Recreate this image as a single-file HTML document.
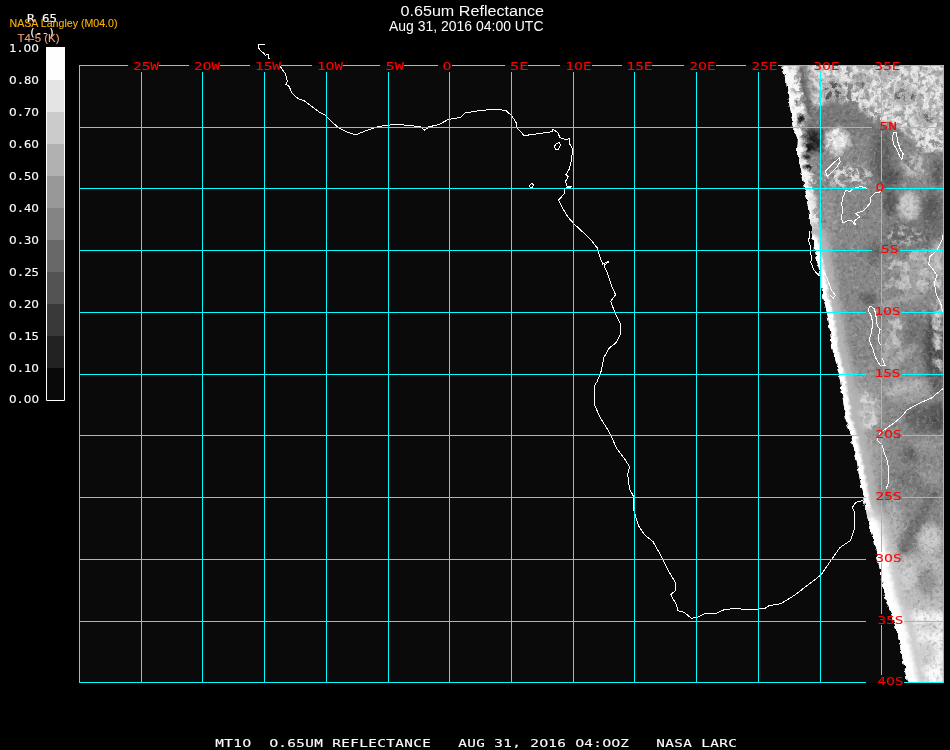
<!DOCTYPE html>
<html lang="en"><head><meta charset="utf-8"><title>0.65um Reflectance</title>
<style>html,body{margin:0;padding:0;background:#000;}body{width:950px;height:750px;overflow:hidden;position:relative;}svg{position:absolute;left:0;top:0;display:block;}.mc{font-family:"DejaVu Sans Mono","Liberation Mono",monospace;font-size:11px;}.mc{stroke-width:.12px}.z{font-family:"DejaVu Sans","Liberation Sans",sans-serif;}.hv{font-family:"Liberation Sans",Arial,Helvetica,sans-serif;}</style></head><body>
<svg width="950" height="750" viewBox="0 0 950 750">
<defs>
<clipPath id="pc"><rect x="79" y="65" width="864" height="618"/></clipPath>
<filter id="disp" filterUnits="userSpaceOnUse" x="760" y="40" width="200" height="670"><feTurbulence type="fractalNoise" baseFrequency="0.2" numOctaves="2" seed="9" result="n"/><feDisplacementMap in="SourceGraphic" in2="n" scale="5" xChannelSelector="R" yChannelSelector="G"/></filter>
<filter id="fnw" x="0" y="0" width="100%" height="100%"><feTurbulence type="fractalNoise" baseFrequency="0.3" numOctaves="2" seed="31"/><feColorMatrix type="matrix" values="0 0 0 0 1  0 0 0 0 1  0 0 0 0 1  3 0 0 0 -1.45"/></filter>
<filter id="fnb" x="0" y="0" width="100%" height="100%"><feTurbulence type="fractalNoise" baseFrequency="0.3" numOctaves="2" seed="57"/><feColorMatrix type="matrix" values="0 0 0 0 0  0 0 0 0 0  0 0 0 0 0  3 0 0 0 -1.45"/></filter>
<clipPath id="lc"><rect x="0" y="0" width="943" height="750"/></clipPath>
<clipPath id="sw"><polygon points="779,50 782,64 786,80 789,100 791,113 793,127 798,140 797,153 799,160 803,180 805,188 808,207 811,227 813,240 815,250 819,270 821,283 823,297 827,312 830,330 832,347 839,374 843,400 846,420 851,435 857,463 863,497 866,510 870,527 878,559 882,580 886,600 894,621 899,640 903,660 907,680 909,684 913,700 960,700 960,50"/></clipPath>
<filter id="b1" x="-50%" y="-50%" width="200%" height="200%"><feGaussianBlur stdDeviation="1"/></filter>
<filter id="b2" x="-50%" y="-50%" width="200%" height="200%"><feGaussianBlur stdDeviation="2"/></filter>
<filter id="b3" x="-50%" y="-50%" width="200%" height="200%"><feGaussianBlur stdDeviation="3"/></filter>
<filter id="b4" x="-50%" y="-50%" width="200%" height="200%"><feGaussianBlur stdDeviation="4"/></filter>
<filter id="b5" x="-50%" y="-50%" width="200%" height="200%"><feGaussianBlur stdDeviation="5"/></filter>
<filter id="b6" x="-50%" y="-50%" width="200%" height="200%"><feGaussianBlur stdDeviation="6"/></filter>
<filter id="b8" x="-50%" y="-50%" width="200%" height="200%"><feGaussianBlur stdDeviation="8"/></filter>
<filter id="cA" x="-20%" y="-20%" width="140%" height="140%"><feGaussianBlur in="SourceGraphic" stdDeviation="2" result="s"/><feTurbulence type="fractalNoise" baseFrequency="0.17" numOctaves="3" seed="3" result="t"/><feColorMatrix in="t" type="matrix" values="0 0 0 0 0  0 0 0 0 0  0 0 0 0 0  5 0 0 0 -1.9" result="m"/><feComposite in="s" in2="m" operator="in"/></filter>
<filter id="cB" x="-20%" y="-20%" width="140%" height="140%"><feGaussianBlur in="SourceGraphic" stdDeviation="2" result="s"/><feTurbulence type="fractalNoise" baseFrequency="0.17" numOctaves="3" seed="3" result="t"/><feColorMatrix in="t" type="matrix" values="0 0 0 0 0  0 0 0 0 0  0 0 0 0 0  5 0 0 0 -2.2" result="m"/><feComposite in="s" in2="m" operator="in"/></filter>
<filter id="cC" x="-20%" y="-20%" width="140%" height="140%"><feGaussianBlur in="SourceGraphic" stdDeviation="2" result="s"/><feTurbulence type="fractalNoise" baseFrequency="0.17" numOctaves="3" seed="3" result="t"/><feColorMatrix in="t" type="matrix" values="0 0 0 0 0  0 0 0 0 0  0 0 0 0 0  5 0 0 0 -2.6" result="m"/><feComposite in="s" in2="m" operator="in"/></filter>
<filter id="sA" x="-20%" y="-20%" width="140%" height="140%"><feGaussianBlur in="SourceGraphic" stdDeviation="2" result="s"/><feTurbulence type="fractalNoise" baseFrequency="0.1" numOctaves="3" seed="5" result="t"/><feColorMatrix in="t" type="matrix" values="0 0 0 0 0  0 0 0 0 0  0 0 0 0 0  5 0 0 0 -1.9" result="m"/><feComposite in="s" in2="m" operator="in"/></filter>
<filter id="sB" x="-20%" y="-20%" width="140%" height="140%"><feGaussianBlur in="SourceGraphic" stdDeviation="2" result="s"/><feTurbulence type="fractalNoise" baseFrequency="0.1" numOctaves="3" seed="5" result="t"/><feColorMatrix in="t" type="matrix" values="0 0 0 0 0  0 0 0 0 0  0 0 0 0 0  5 0 0 0 -2.3" result="m"/><feComposite in="s" in2="m" operator="in"/></filter>
</defs>
<rect x="79" y="65" width="865" height="618" fill="#0a0a0a"/>
<g clip-path="url(#pc)"><g filter="url(#disp)"><g clip-path="url(#sw)">
<rect x="770" y="45" width="195" height="660" fill="#888888"/>
<polygon points="775,60 945,60 945,135 775,135" fill="rgb(120,120,120)" filter="url(#b3)"/>
<ellipse cx="936" cy="72" rx="10" ry="9" transform="rotate(0 936 72)" fill="rgb(105,105,105)" filter="url(#b2)"/>
<ellipse cx="882" cy="158" rx="11" ry="28" transform="rotate(0 882 158)" fill="rgb(95,95,95)" filter="url(#b4)"/>
<ellipse cx="892" cy="178" rx="9" ry="10" transform="rotate(0 892 178)" fill="rgb(85,85,85)" filter="url(#b3)"/>
<ellipse cx="938" cy="172" rx="6" ry="14" transform="rotate(0 938 172)" fill="rgb(90,90,90)" filter="url(#b3)"/>
<ellipse cx="890" cy="203" rx="7" ry="13" transform="rotate(0 890 203)" fill="rgb(85,85,85)" filter="url(#b3)"/>
<ellipse cx="932" cy="213" rx="10" ry="22" transform="rotate(0 932 213)" fill="rgb(88,88,88)" filter="url(#b4)"/>
<polygon points="884,222 942,222 942,250 884,250" fill="rgb(112,112,112)" filter="url(#b4)"/>
<ellipse cx="828" cy="220" rx="8" ry="30" transform="rotate(0 828 220)" fill="rgb(150,150,150)" filter="url(#b4)"/>
<ellipse cx="874" cy="252" rx="7" ry="13" transform="rotate(0 874 252)" fill="rgb(106,106,106)" filter="url(#b3)"/>
<ellipse cx="868" cy="299" rx="9" ry="6" transform="rotate(0 868 299)" fill="rgb(100,100,100)" filter="url(#b2)"/>
<ellipse cx="913" cy="334" rx="11" ry="19" transform="rotate(0 913 334)" fill="rgb(114,114,114)" filter="url(#b4)"/>
<ellipse cx="934" cy="347" rx="10" ry="34" transform="rotate(0 934 347)" fill="rgb(76,76,76)" filter="url(#b3)"/>
<ellipse cx="937" cy="383" rx="7" ry="10" transform="rotate(0 937 383)" fill="rgb(90,90,90)" filter="url(#b3)"/>
<ellipse cx="925" cy="418" rx="20" ry="15" transform="rotate(0 925 418)" fill="rgb(98,98,98)" filter="url(#b4)"/>
<ellipse cx="938" cy="418" rx="6" ry="16" transform="rotate(0 938 418)" fill="rgb(80,80,80)" filter="url(#b3)"/>
<ellipse cx="910" cy="454" rx="8" ry="7" transform="rotate(0 910 454)" fill="rgb(92,92,92)" filter="url(#b3)"/>
<ellipse cx="907" cy="480" rx="12" ry="9" transform="rotate(0 907 480)" fill="rgb(115,115,115)" filter="url(#b4)"/>
<ellipse cx="928" cy="488" rx="14" ry="8" transform="rotate(0 928 488)" fill="rgb(108,108,108)" filter="url(#b3)"/>
<ellipse cx="909" cy="206" rx="10" ry="14" transform="rotate(0 909 206)" fill="rgb(202,202,202)" filter="url(#b2)"/>
<ellipse cx="916" cy="274" rx="14" ry="22" transform="rotate(0 916 274)" fill="rgb(160,160,160)" filter="url(#b4)"/>
<ellipse cx="937" cy="258" rx="6" ry="18" transform="rotate(0 937 258)" fill="rgb(195,195,195)" filter="url(#b3)"/>
<polyline points="883,306 900,300 916,296" fill="none" stroke="rgb(165,165,165)" stroke-width="7" stroke-linecap="round" stroke-linejoin="round" filter="url(#b2)"/>
<ellipse cx="892" cy="340" rx="8" ry="27" transform="rotate(8 892 340)" fill="rgb(158,158,158)" filter="url(#b4)"/>
<polyline points="893,366 903,356 914,346" fill="none" stroke="rgb(170,170,170)" stroke-width="6" stroke-linecap="round" stroke-linejoin="round" filter="url(#b2)"/>
<ellipse cx="866" cy="385" rx="14" ry="18" transform="rotate(0 866 385)" fill="rgb(150,150,150)" filter="url(#b5)"/>
<ellipse cx="864" cy="412" rx="16" ry="21" transform="rotate(0 864 412)" fill="rgb(182,182,182)" filter="url(#b4)"/>
<ellipse cx="906" cy="390" rx="25" ry="12" transform="rotate(0 906 390)" fill="rgb(165,165,165)" filter="url(#b4)"/>
<polyline points="888,393 918,383" fill="none" stroke="rgb(192,192,192)" stroke-width="5" stroke-linecap="round" stroke-linejoin="round" filter="url(#b2)"/>
<ellipse cx="892" cy="420" rx="10" ry="11" transform="rotate(0 892 420)" fill="rgb(138,138,138)" filter="url(#b4)"/>
<ellipse cx="928" cy="446" rx="14" ry="9" transform="rotate(0 928 446)" fill="rgb(150,150,150)" filter="url(#b4)"/>
<ellipse cx="870" cy="462" rx="12" ry="30" transform="rotate(12 870 462)" fill="rgb(160,160,160)" filter="url(#b5)"/>
<ellipse cx="932" cy="480" rx="10" ry="12" transform="rotate(0 932 480)" fill="rgb(150,150,150)" filter="url(#b4)"/>
<polygon points="880,555 945,555 945,625 890,625" fill="rgb(190,190,190)" filter="url(#b4)"/>
<polygon points="890,612 945,612 945,690 905,690" fill="rgb(250,250,250)" filter="url(#b3)"/>
<ellipse cx="927" cy="581" rx="11" ry="15" transform="rotate(0 927 581)" fill="rgb(148,148,148)" filter="url(#b3)"/>
<ellipse cx="928" cy="627" rx="13" ry="5" transform="rotate(0 928 627)" fill="rgb(205,205,205)" filter="url(#b3)"/>
<ellipse cx="927" cy="653" rx="10" ry="13" transform="rotate(0 927 653)" fill="rgb(208,208,208)" filter="url(#b3)"/>
<ellipse cx="893" cy="528" rx="10" ry="30" transform="rotate(0 893 528)" fill="rgb(175,175,175)" filter="url(#b4)"/>
<ellipse cx="930" cy="540" rx="13" ry="16" transform="rotate(0 930 540)" fill="rgb(200,200,200)" filter="url(#b3)"/>
<polyline points="933,495 903,548" fill="none" stroke="rgb(112,112,112)" stroke-width="11" stroke-linecap="round" stroke-linejoin="round" filter="url(#b2)"/>
<ellipse cx="906" cy="578" rx="9" ry="12" transform="rotate(0 906 578)" fill="rgb(205,205,205)" filter="url(#b3)"/>
<polygon points="845,60 945,60 945,145 915,136 898,124 875,114 856,100" fill="rgb(172,172,172)" filter="url(#b4)"/>
<polygon points="780,60 796,60 806,116 798,127 785,127" fill="rgb(175,175,175)" filter="url(#b3)"/>
<polygon points="806,60 845,60 845,96 824,102 814,106" fill="rgb(180,180,180)" filter="url(#b3)"/>
<ellipse cx="837" cy="141" rx="10" ry="11" transform="rotate(0 837 141)" fill="rgb(225,225,225)" filter="url(#b3)"/>
<polygon points="822,60 945,60 945,150 915,140 898,128 875,120 850,102 822,102" fill="rgb(232,232,232)" filter="url(#cA)"/>
<polygon points="780,60 798,60 808,116 800,127 785,127" fill="rgb(240,240,240)" filter="url(#cA)"/>
<polygon points="808,60 824,60 824,104 814,108" fill="rgb(225,225,225)" filter="url(#cA)"/>
<polyline points="801,70 805,92 810,114" fill="none" stroke="rgb(100,100,100)" stroke-width="4" stroke-linecap="round" stroke-linejoin="round" filter="url(#b1)"/>
<ellipse cx="833" cy="92" rx="10" ry="12" transform="rotate(0 833 92)" fill="rgb(90,90,90)" filter="url(#cB)"/>
<ellipse cx="862" cy="80" rx="9" ry="7" transform="rotate(0 862 80)" fill="rgb(100,100,100)" filter="url(#cB)"/>
<ellipse cx="905" cy="96" rx="12" ry="8" transform="rotate(0 905 96)" fill="rgb(100,100,100)" filter="url(#cB)"/>
<ellipse cx="925" cy="118" rx="10" ry="7" transform="rotate(0 925 118)" fill="rgb(105,105,105)" filter="url(#cB)"/>
<ellipse cx="885" cy="72" rx="8" ry="5" transform="rotate(0 885 72)" fill="rgb(110,110,110)" filter="url(#cB)"/>
<polygon points="795,150 812,150 816,190 805,190" fill="rgb(215,215,215)" filter="url(#cB)"/>
<ellipse cx="837" cy="141" rx="12" ry="13" transform="rotate(0 837 141)" fill="rgb(245,245,245)" filter="url(#cA)"/>
<ellipse cx="813" cy="141" rx="9" ry="12" transform="rotate(0 813 141)" fill="rgb(30,30,30)" filter="url(#b3)"/>
<ellipse cx="847" cy="176" rx="24" ry="11" transform="rotate(0 847 176)" fill="rgb(225,225,225)" filter="url(#cB)"/>
<ellipse cx="915" cy="166" rx="12" ry="12" transform="rotate(0 915 166)" fill="rgb(190,190,190)" filter="url(#cA)"/>
<ellipse cx="930" cy="142" rx="14" ry="10" transform="rotate(0 930 142)" fill="rgb(235,235,235)" filter="url(#cA)"/>
<ellipse cx="905" cy="236" rx="18" ry="9" transform="rotate(0 905 236)" fill="rgb(185,185,185)" filter="url(#cB)"/>
<ellipse cx="925" cy="258" rx="14" ry="9" transform="rotate(0 925 258)" fill="rgb(180,180,180)" filter="url(#cB)"/>
<ellipse cx="916" cy="274" rx="14" ry="22" transform="rotate(0 916 274)" fill="rgb(200,200,200)" filter="url(#sB)"/>
<ellipse cx="937" cy="300" rx="5" ry="40" transform="rotate(0 937 300)" fill="rgb(215,215,215)" filter="url(#sA)"/>
<ellipse cx="938" cy="350" rx="4" ry="30" transform="rotate(0 938 350)" fill="rgb(215,215,215)" filter="url(#sA)"/>
<ellipse cx="864" cy="412" rx="16" ry="21" transform="rotate(0 864 412)" fill="rgb(215,215,215)" filter="url(#sB)"/>
<ellipse cx="905" cy="275" rx="22" ry="24" transform="rotate(0 905 275)" fill="rgb(195,195,195)" filter="url(#sB)"/>
<ellipse cx="894" cy="340" rx="10" ry="28" transform="rotate(5 894 340)" fill="rgb(195,195,195)" filter="url(#sB)"/>
<rect x="770" y="45" width="195" height="660" filter="url(#fnw)" opacity="0.22"/>
<rect x="770" y="45" width="195" height="660" filter="url(#fnb)" opacity="0.2"/>
<polyline points="782,64 786,80 789,100 791,113 793,127 798,140" fill="none" stroke="rgb(245,245,245)" stroke-width="25" stroke-linecap="round" stroke-linejoin="round" filter="url(#cA)"/>
<polyline points="793,127 798,140 797,153 799,160 803,180 805,188 808,207 811,227 813,240 815,250" fill="none" stroke="rgb(240,240,240)" stroke-width="17" stroke-linecap="round" stroke-linejoin="round" filter="url(#cA)"/>
<polyline points="782,64 786,80 789,100 791,113 793,127 798,140 797,153 799,160 803,180 805,188 808,207 811,227 813,240 815,250" fill="none" stroke="rgb(250,250,250)" stroke-width="9" stroke-linecap="round" stroke-linejoin="round" filter="url(#b2)"/>
<polyline points="813,240 815,250 819,270 821,283 823,297 827,312 830,330 832,347 839,374 843,400 846,420 851,435 857,463 863,497 866,510 870,527 878,559 882,580 886,600 894,621 899,640 903,660 907,680 909,684" fill="none" stroke="rgb(182,182,182)" stroke-width="30" stroke-linecap="round" stroke-linejoin="round" filter="url(#b3)"/>
<polyline points="813,240 815,250 819,270 821,283 823,297 827,312 830,330 832,347 839,374 843,400 846,420 851,435 857,463 863,497 866,510 870,527 878,559 882,580 886,600 894,621 899,640 903,660 907,680 909,684" fill="none" stroke="rgb(255,255,255)" stroke-width="11" stroke-linecap="round" stroke-linejoin="round" filter="url(#b1)"/>
<polyline points="870,527 878,559 882,580 886,600 894,621 899,640 903,660 907,680 909,684" fill="none" stroke="rgb(205,205,205)" stroke-width="34" stroke-linecap="round" stroke-linejoin="round" filter="url(#b4)"/>
<polyline points="870,527 878,559 882,580 886,600 894,621 899,640 903,660 907,680 909,684" fill="none" stroke="rgb(255,255,255)" stroke-width="20" stroke-linecap="round" stroke-linejoin="round" filter="url(#b2)"/>
<ellipse cx="801" cy="119" rx="2.5" ry="5" transform="rotate(20 801 119)" fill="rgb(15,15,15)" filter="url(#b1)"/>
<ellipse cx="809" cy="148" rx="2" ry="5" transform="rotate(0 809 148)" fill="rgb(12,12,12)" filter="url(#b1)"/>
<ellipse cx="806" cy="157" rx="4" ry="1.8" transform="rotate(0 806 157)" fill="rgb(12,12,12)" filter="url(#b1)"/>
<ellipse cx="808" cy="167" rx="4" ry="2" transform="rotate(10 808 167)" fill="rgb(12,12,12)" filter="url(#b1)"/>
<ellipse cx="797" cy="103" rx="1.5" ry="2" transform="rotate(0 797 103)" fill="rgb(15,15,15)" filter="url(#b1)"/>
</g></g></g>
<g clip-path="url(#lc)">
<polyline points="279.9,66 282.2,69.3 285,73 286.4,77.2 287.3,81.8 285.9,84.2 289.2,86.5 291.5,92.1 293.8,94.9 295.7,96.8 299.9,99.6 304,100.5 312.6,107 319,112 325,115 332.6,122.6 339,128 347,132 355.8,135 366,130.6 379,126.4 395.8,124.3 412.6,125.8 421,127 424.8,130.4 428.4,127 439.7,124.3 447.8,119.6 460.5,117.3 465,113 478,110.8 494,109.2 505.7,110.4 511.5,115.5 516,122.4 517.3,128.2 524.2,135.6 535.8,134 552,131.7 553,129 557.8,132.8 560,137.5 566,139.8 569.4,138.6 570,144.4 572.4,149 571.7,159.5 569.4,168.7 566,174.5 568.2,176.8 565.4,181.5 567,186 572.4,186.8 564.7,188.4 564,194.2 558.5,200 562.4,208 568.2,217.4 574,223.9 582,231.3 591.4,240.5 597.3,248 600,257.3 602.7,264 609.3,261.3 604,265.3 608,274.7 612,286.7 615.5,294.7 610.7,301.3 614.7,312 620,322.7 620,334.7 616,342.7 609.3,348 604,357.3 601.3,370.7 597.3,381.3 594.7,385.3 594.7,405.3 600,417.3 606.7,428 610.6,434.7 616.4,447.9 625.2,459.6 629.6,467 627.6,474.3 629.6,489 633.5,496.3 634,511 638.4,525.7 644.3,534.5 653.1,541.8 660.5,555 667.8,569.7 675.7,583 675.7,590.3 670.7,594.7 676.6,605 678,610.8 684,612.3 691.3,618.2 697.2,617.3 704.5,613.8 716.2,613.2 725,609.4 736.8,608.5 750,610 765.6,608 769,605.7 781,603.6 795,595 807,585.6 821,575 831.5,559.6 840,547.5 850.5,540.5 854,530 855,512.8 852.3,507.6 855.7,502.4 862.6,500.7" fill="none" stroke="#fff" stroke-width="1" shape-rendering="crispEdges"/>
<polyline points="265,45 258.4,44.5 258.9,48.3 261.2,51.5 264,53.4 265.4,55.3 268.7,54.3 269.1,59.5" fill="none" stroke="#fff" stroke-width="1" shape-rendering="crispEdges"/>
<polyline points="554.3,146.7 556.6,143.3 559.6,142.8 560.6,145.1 558.5,149 555.5,149 554.3,146.7" fill="none" stroke="#fff" stroke-width="1" shape-rendering="crispEdges"/>
<polyline points="529.5,185.4 531.6,183.6 533.7,184.5 532.3,187.3 530,187 529.5,185.4" fill="none" stroke="#fff" stroke-width="1" shape-rendering="crispEdges"/>
<polyline points="893.4,132.3 896.2,132.3 897.6,141.2 900.4,149.6 903.2,153.8 901.8,159.4 899.9,156.6 897,149.6 893.4,144 892.6,137 893.4,132.3" fill="none" stroke="#fff" stroke-width="1" shape-rendering="crispEdges"/>
<polyline points="826.2,174.8 825.7,170.6 830.4,165.9 836,160.8 839.4,158 840.2,161.4 837.4,166.4 831.8,172 827.6,176.2 826.2,174.8" fill="none" stroke="#fff" stroke-width="1" shape-rendering="crispEdges"/>
<polyline points="880.8,191.7 875.2,193 871,197.3 870.2,202.9 866.8,207 862.6,211.3 855.6,213.5 859.8,216.9 854.2,221 855.6,225.3 851.4,220.2 847.2,221 843,223 841,216.9 843,211.3 841.6,204.3 843,197.3 845.8,190.3 850,191.7 853.4,188.3 861.2,186.6 866.8,188.3" fill="none" stroke="#fff" stroke-width="1" shape-rendering="crispEdges"/>
<polyline points="810,230.7 809.7,237.3 808,240 810,244.7 810,253.3 812,256.7 810.7,262 813.3,268.7 816,272.7 819.3,276 821.3,275.3 824.7,272.7 828,280.7 831.3,290 835.3,295.3 833.3,298 830,295.3" fill="none" stroke="#fff" stroke-width="1" shape-rendering="crispEdges"/>
<polyline points="869.9,305.7 868,310 870.8,314.7 872.7,322.2 871.7,331.5 869,339.9 872.7,348.3 875.5,357.6 880,365 884.8,365 882,357.6 881,344.6 879.2,343.6 878.3,337 880,329.6 877.3,325.9 876.4,318.4 874.5,309 869.9,305.7" fill="none" stroke="#fff" stroke-width="1" shape-rendering="crispEdges"/>
<polyline points="948,221 943.9,228 942.5,239.3 936.9,250.5 929.6,256.8 928.7,264.3 933.4,269.9 937,275.5 934.3,283 936.2,294 940.8,303.5 942.7,312 948,316.6" fill="none" stroke="#fff" stroke-width="1" shape-rendering="crispEdges"/>
<polyline points="948,381 942.7,388.7 931.5,398 918.4,403.6 907,410 901.6,416.7 894,423 886.7,428 880,433.5 877,440 882,444.7 884,452 887.6,461.5 889,474.6 888,484 885.8,489.5" fill="none" stroke="#fff" stroke-width="1" shape-rendering="crispEdges"/>
</g>
<rect x="79" y="65" width="49" height="1" fill="#00ffff"/>
<rect x="159" y="65" width="30" height="1" fill="#00ffff"/>
<rect x="220" y="65" width="30" height="1" fill="#00ffff"/>
<rect x="281" y="65" width="31" height="1" fill="#00ffff"/>
<rect x="343" y="65" width="37" height="1" fill="#00ffff"/>
<rect x="404" y="65" width="34" height="1" fill="#00ffff"/>
<rect x="452" y="65" width="53" height="1" fill="#00ffff"/>
<rect x="528" y="65" width="32" height="1" fill="#00ffff"/>
<rect x="592" y="65" width="30" height="1" fill="#00ffff"/>
<rect x="652" y="65" width="32" height="1" fill="#00ffff"/>
<rect x="716" y="65" width="30" height="1" fill="#00ffff"/>
<rect x="778" y="65" width="30" height="1" fill="#00ffff"/>
<rect x="840" y="65" width="30" height="1" fill="#00ffff"/>
<rect x="900" y="65" width="44" height="1" fill="#00ffff"/>
<rect x="79" y="127" width="793" height="1" fill="#00ffff"/>
<rect x="898" y="127" width="46" height="1" fill="#00ffff"/>
<rect x="79" y="188" width="787" height="1" fill="#00ffff"/>
<rect x="886" y="188" width="58" height="1" fill="#00ffff"/>
<rect x="79" y="250" width="793" height="1" fill="#00ffff"/>
<rect x="900" y="250" width="44" height="1" fill="#00ffff"/>
<rect x="79" y="312" width="787" height="1" fill="#00ffff"/>
<rect x="902" y="312" width="42" height="1" fill="#00ffff"/>
<rect x="79" y="374" width="787" height="1" fill="#00ffff"/>
<rect x="902" y="374" width="42" height="1" fill="#00ffff"/>
<rect x="79" y="435" width="787" height="1" fill="#00ffff"/>
<rect x="902" y="435" width="42" height="1" fill="#00ffff"/>
<rect x="79" y="497" width="787" height="1" fill="#00ffff"/>
<rect x="902" y="497" width="42" height="1" fill="#00ffff"/>
<rect x="79" y="559" width="787" height="1" fill="#00ffff"/>
<rect x="902" y="559" width="42" height="1" fill="#00ffff"/>
<rect x="79" y="621" width="787" height="1" fill="#00ffff"/>
<rect x="904" y="621" width="40" height="1" fill="#00ffff"/>
<rect x="79" y="682" width="787" height="1" fill="#00ffff"/>
<rect x="904" y="682" width="40" height="1" fill="#00ffff"/>
<rect x="79" y="65" width="1" height="618" fill="#00ffff"/>
<rect x="141" y="72" width="1" height="611" fill="#00ffff"/>
<rect x="202" y="72" width="1" height="611" fill="#00ffff"/>
<rect x="264" y="72" width="1" height="611" fill="#00ffff"/>
<rect x="326" y="72" width="1" height="611" fill="#00ffff"/>
<rect x="388" y="72" width="1" height="611" fill="#00ffff"/>
<rect x="449" y="72" width="1" height="611" fill="#00ffff"/>
<rect x="511" y="72" width="1" height="611" fill="#00ffff"/>
<rect x="573" y="72" width="1" height="611" fill="#00ffff"/>
<rect x="634" y="72" width="1" height="611" fill="#00ffff"/>
<rect x="696" y="72" width="1" height="611" fill="#00ffff"/>
<rect x="758" y="72" width="1" height="611" fill="#00ffff"/>
<rect x="820" y="72" width="1" height="611" fill="#00ffff"/>
<rect x="881" y="72" width="1" height="48" fill="#00ffff"/>
<rect x="881" y="131" width="1" height="50" fill="#00ffff"/>
<rect x="881" y="192" width="1" height="51" fill="#00ffff"/>
<rect x="881" y="254" width="1" height="51" fill="#00ffff"/>
<rect x="881" y="316" width="1" height="51" fill="#00ffff"/>
<rect x="881" y="378" width="1" height="50" fill="#00ffff"/>
<rect x="881" y="439" width="1" height="51" fill="#00ffff"/>
<rect x="881" y="501" width="1" height="51" fill="#00ffff"/>
<rect x="881" y="563" width="1" height="51" fill="#00ffff"/>
<rect x="881" y="625" width="1" height="50" fill="#00ffff"/>
<rect x="943" y="65" width="1" height="618" fill="#00ffff"/>
<g opacity="0.999">
<text class="mc" x="133" y="70" textLength="26" lengthAdjust="spacingAndGlyphs" fill="#f00" stroke="#f00">25W</text>
<text class="mc" x="194" y="70" textLength="26" lengthAdjust="spacingAndGlyphs" fill="#f00" stroke="#f00">2<tspan class="z">0</tspan>W</text>
<text class="mc" x="255" y="70" textLength="26" lengthAdjust="spacingAndGlyphs" fill="#f00" stroke="#f00">15W</text>
<text class="mc" x="317" y="70" textLength="26" lengthAdjust="spacingAndGlyphs" fill="#f00" stroke="#f00">1<tspan class="z">0</tspan>W</text>
<text class="mc" x="385.5" y="70" textLength="18.5" lengthAdjust="spacingAndGlyphs" fill="#f00" stroke="#f00">5W</text>
<text class="mc" x="442.5" y="70" textLength="9" lengthAdjust="spacingAndGlyphs" fill="#f00" stroke="#f00"><tspan class="z">0</tspan></text>
<text class="mc" x="510" y="70" textLength="18.5" lengthAdjust="spacingAndGlyphs" fill="#f00" stroke="#f00">5E</text>
<text class="mc" x="565.5" y="70" textLength="26" lengthAdjust="spacingAndGlyphs" fill="#f00" stroke="#f00">1<tspan class="z">0</tspan>E</text>
<text class="mc" x="626.5" y="70" textLength="26" lengthAdjust="spacingAndGlyphs" fill="#f00" stroke="#f00">15E</text>
<text class="mc" x="689.5" y="70" textLength="26" lengthAdjust="spacingAndGlyphs" fill="#f00" stroke="#f00">2<tspan class="z">0</tspan>E</text>
<text class="mc" x="751.5" y="70" textLength="26" lengthAdjust="spacingAndGlyphs" fill="#f00" stroke="#f00">25E</text>
<text class="mc" x="813.5" y="70" textLength="26" lengthAdjust="spacingAndGlyphs" fill="#f00" stroke="#f00">3<tspan class="z">0</tspan>E</text>
<text class="mc" x="874.5" y="70" textLength="26" lengthAdjust="spacingAndGlyphs" fill="#f00" stroke="#f00">35E</text>
<text class="mc" x="879.5" y="130" textLength="17.5" lengthAdjust="spacingAndGlyphs" fill="#f00" stroke="#f00">5N</text>
<text class="mc" x="875.5" y="191" textLength="9" lengthAdjust="spacingAndGlyphs" fill="#f00" stroke="#f00"><tspan class="z">0</tspan></text>
<text class="mc" x="881" y="253" textLength="17.5" lengthAdjust="spacingAndGlyphs" fill="#f00" stroke="#f00">5S</text>
<text class="mc" x="874.5" y="315" textLength="26" lengthAdjust="spacingAndGlyphs" fill="#f00" stroke="#f00">1<tspan class="z">0</tspan>S</text>
<text class="mc" x="874.5" y="377" textLength="26" lengthAdjust="spacingAndGlyphs" fill="#f00" stroke="#f00">15S</text>
<text class="mc" x="875.5" y="438" textLength="26" lengthAdjust="spacingAndGlyphs" fill="#f00" stroke="#f00">2<tspan class="z">0</tspan>S</text>
<text class="mc" x="875.5" y="500" textLength="26" lengthAdjust="spacingAndGlyphs" fill="#f00" stroke="#f00">25S</text>
<text class="mc" x="875.5" y="562" textLength="26" lengthAdjust="spacingAndGlyphs" fill="#f00" stroke="#f00">3<tspan class="z">0</tspan>S</text>
<text class="mc" x="877.5" y="624" textLength="26" lengthAdjust="spacingAndGlyphs" fill="#f00" stroke="#f00">35S</text>
<text class="mc" x="877.5" y="685" textLength="26" lengthAdjust="spacingAndGlyphs" fill="#f00" stroke="#f00">4<tspan class="z">0</tspan>S</text>
<rect x="47" y="48" width="17" height="32" fill="rgb(255,255,255)"/>
<rect x="47" y="80" width="17" height="32" fill="rgb(229,229,229)"/>
<rect x="47" y="112" width="17" height="32" fill="rgb(204,204,204)"/>
<rect x="47" y="144" width="17" height="32" fill="rgb(178,178,178)"/>
<rect x="47" y="176" width="17" height="32" fill="rgb(153,153,153)"/>
<rect x="47" y="208" width="17" height="32" fill="rgb(133,133,133)"/>
<rect x="47" y="240" width="17" height="32" fill="rgb(105,105,105)"/>
<rect x="47" y="272" width="17" height="32" fill="rgb(84,84,84)"/>
<rect x="47" y="304" width="17" height="32" fill="rgb(58,58,58)"/>
<rect x="47" y="336" width="17" height="32" fill="rgb(35,35,35)"/>
<rect x="47" y="368" width="17" height="32" fill="rgb(10,10,10)"/>
<path d="M46.5 47.5V400.5H64.5V47.5" fill="none" stroke="#fff" stroke-width="1"/>
<rect x="46" y="47" width="19" height="1" fill="#fff"/>
<text class="mc" x="9" y="52" textLength="30" lengthAdjust="spacingAndGlyphs" fill="#fff" stroke="#fff">1.<tspan class="z">0</tspan><tspan class="z">0</tspan></text>
<text class="mc" x="9" y="84" textLength="30" lengthAdjust="spacingAndGlyphs" fill="#fff" stroke="#fff"><tspan class="z">0</tspan>.8<tspan class="z">0</tspan></text>
<text class="mc" x="9" y="116" textLength="30" lengthAdjust="spacingAndGlyphs" fill="#fff" stroke="#fff"><tspan class="z">0</tspan>.7<tspan class="z">0</tspan></text>
<text class="mc" x="9" y="148" textLength="30" lengthAdjust="spacingAndGlyphs" fill="#fff" stroke="#fff"><tspan class="z">0</tspan>.6<tspan class="z">0</tspan></text>
<text class="mc" x="9" y="180" textLength="30" lengthAdjust="spacingAndGlyphs" fill="#fff" stroke="#fff"><tspan class="z">0</tspan>.5<tspan class="z">0</tspan></text>
<text class="mc" x="9" y="212" textLength="30" lengthAdjust="spacingAndGlyphs" fill="#fff" stroke="#fff"><tspan class="z">0</tspan>.4<tspan class="z">0</tspan></text>
<text class="mc" x="9" y="244" textLength="30" lengthAdjust="spacingAndGlyphs" fill="#fff" stroke="#fff"><tspan class="z">0</tspan>.3<tspan class="z">0</tspan></text>
<text class="mc" x="9" y="276" textLength="30" lengthAdjust="spacingAndGlyphs" fill="#fff" stroke="#fff"><tspan class="z">0</tspan>.25</text>
<text class="mc" x="9" y="308" textLength="30" lengthAdjust="spacingAndGlyphs" fill="#fff" stroke="#fff"><tspan class="z">0</tspan>.2<tspan class="z">0</tspan></text>
<text class="mc" x="9" y="340" textLength="30" lengthAdjust="spacingAndGlyphs" fill="#fff" stroke="#fff"><tspan class="z">0</tspan>.15</text>
<text class="mc" x="9" y="372" textLength="30" lengthAdjust="spacingAndGlyphs" fill="#fff" stroke="#fff"><tspan class="z">0</tspan>.1<tspan class="z">0</tspan></text>
<text class="mc" x="9" y="403" textLength="30" lengthAdjust="spacingAndGlyphs" fill="#fff" stroke="#fff"><tspan class="z">0</tspan>.<tspan class="z">0</tspan><tspan class="z">0</tspan></text>
<text class="mc" x="27" y="22" textLength="30" lengthAdjust="spacingAndGlyphs" fill="#fff" stroke="#fff" xml:space="preserve" style="white-space:pre">R 65</text>
<text class="mc" x="29" y="36" textLength="26" lengthAdjust="spacingAndGlyphs" fill="#fff" stroke="#fff">(--)</text>
<text class="hv" x="9.5" y="27" font-size="11px" textLength="108" lengthAdjust="spacingAndGlyphs" fill="#ffb400" stroke="#ffb400" stroke-width="0.12">NASA Langley (M04.0)</text>
<text class="hv" x="17.5" y="42" font-size="11px" textLength="42" lengthAdjust="spacingAndGlyphs" fill="#f0a078" stroke="#f0a078" stroke-width="0.12">T4-5 (K)</text>
<text class="hv" x="400.5" y="15.5" font-size="15.5px" textLength="143.5" lengthAdjust="spacingAndGlyphs" fill="#fff">0.65um Reflectance</text>
<text class="hv" x="389" y="31" font-size="14.2px" textLength="154.5" lengthAdjust="spacingAndGlyphs" fill="#fff">Aug 31, 2016 04:00 UTC</text>
<text class="mc" transform="scale(1.3,1)" x="165.62 172.54 179.46 186.38 193.31 200.23 207.15 214.08 221.00 227.92 234.85 241.77 248.69 255.62 262.54 269.46 276.38 283.31 290.23 297.15 304.08 311.00 317.92 324.85 331.77 338.69 345.62 352.54 359.46 366.38 373.31 380.23 387.15 394.08 401.00 407.92 414.85 421.77 428.69 435.62 442.54 449.46 456.38 463.31 470.23 477.15 484.08 491.00 497.92 504.85 511.77 518.69 525.62 532.54 539.46 546.38 553.31 560.23" y="747" font-size="11.5px" fill="#fff" stroke="#fff" xml:space="preserve" style="white-space:pre">MT1<tspan class="z">0</tspan>  <tspan class="z">0</tspan>.65UM REFLECTANCE   AUG 31, 2<tspan class="z">0</tspan>16 <tspan class="z">0</tspan>4:<tspan class="z">0</tspan><tspan class="z">0</tspan>Z   NASA LARC</text>
</g>
</svg></body></html>
